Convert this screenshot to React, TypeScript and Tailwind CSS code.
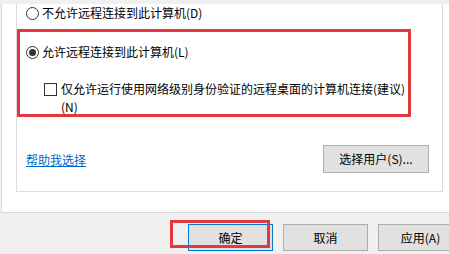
import React from 'react';

const font = { fontFamily: '"Noto Sans CJK SC", "Microsoft YaHei", sans-serif' };

const Radio = ({ checked }: { checked?: boolean }) => (
  <span className="w-[13px] h-[13px] rounded-full border border-[#333333] bg-white flex items-center justify-center shrink-0">
    {checked && <span className="w-[7px] h-[7px] rounded-full bg-[#333333]" />}
  </span>
);

const WinButton = ({ label, primary, className = '' }: { label: string; primary?: boolean; className?: string }) => (
  <button
    className={`h-[27px] bg-[#e1e1e1] border text-[12px] text-black flex items-center justify-center shrink-0 ${primary ? 'border-[#0078d7]' : 'border-[#adadad]'} ${className}`}
  >
    {label}
  </button>
);

const App: React.FC = () => {
  return (
    <div className="relative w-[449px] h-[254px] overflow-hidden bg-[#f0f0f0] text-[12px] text-black" style={font}>
      {/* tab page */}
      <div className="h-[209px] w-[470px] bg-white border-l border-b border-[#d9d9d9] ml-px">
        {/* group box */}
        <div className="ml-[14px] w-[427px] h-[188px] border-l border-r border-b border-[#dcdcdc] pl-[9px] pr-[13px]">
          <div className="h-[18px] mt-[4px] flex items-center gap-[3px] leading-[18px]">
            <Radio />
            <span>不允许远程连接到此计算机(D)</span>
          </div>
          <div className="h-[18px] mt-[21px] flex items-center gap-[3px] leading-[18px]">
            <Radio checked />
            <span>允许远程连接到此计算机(L)</span>
          </div>
          <div className="mt-[19px] ml-[18px] flex items-start gap-[4px] leading-[18px]">
            <span className="w-[13px] h-[13px] border border-[#333333] bg-white mt-[3px] shrink-0" />
            <span>
              仅允许运行使用网络级别身份验证的远程桌面的计算机连接(建议)
              <br />
              (N)
            </span>
          </div>
          <div className="mt-[29px] h-[28px] flex items-center justify-between">
            <a href="#" className="text-[#0066cc] underline leading-[18px] mt-[2px]">帮助我选择</a>
            <WinButton label="选择用户(S)..." className="w-[106px] h-[28px]" />
          </div>
        </div>
      </div>

      {/* dialog buttons */}
      <div className="mt-[11px] ml-[188px] flex gap-[10px]">
        <WinButton label="确定" primary className="w-[85px]" />
        <WinButton label="取消" className="w-[85px]" />
        <WinButton label="应用(A)" className="w-[85px]" />
      </div>

      {/* annotation boxes */}
      <div className="absolute left-[17px] top-[29px] w-[394px] h-[88px] border-[3px] border-[#e3383d] pointer-events-none" />
      <div className="absolute left-[170px] top-[220px] w-[100px] h-[28px] border-[3px] border-[#e3383d] pointer-events-none" />
    </div>
  );
};

export default App;
